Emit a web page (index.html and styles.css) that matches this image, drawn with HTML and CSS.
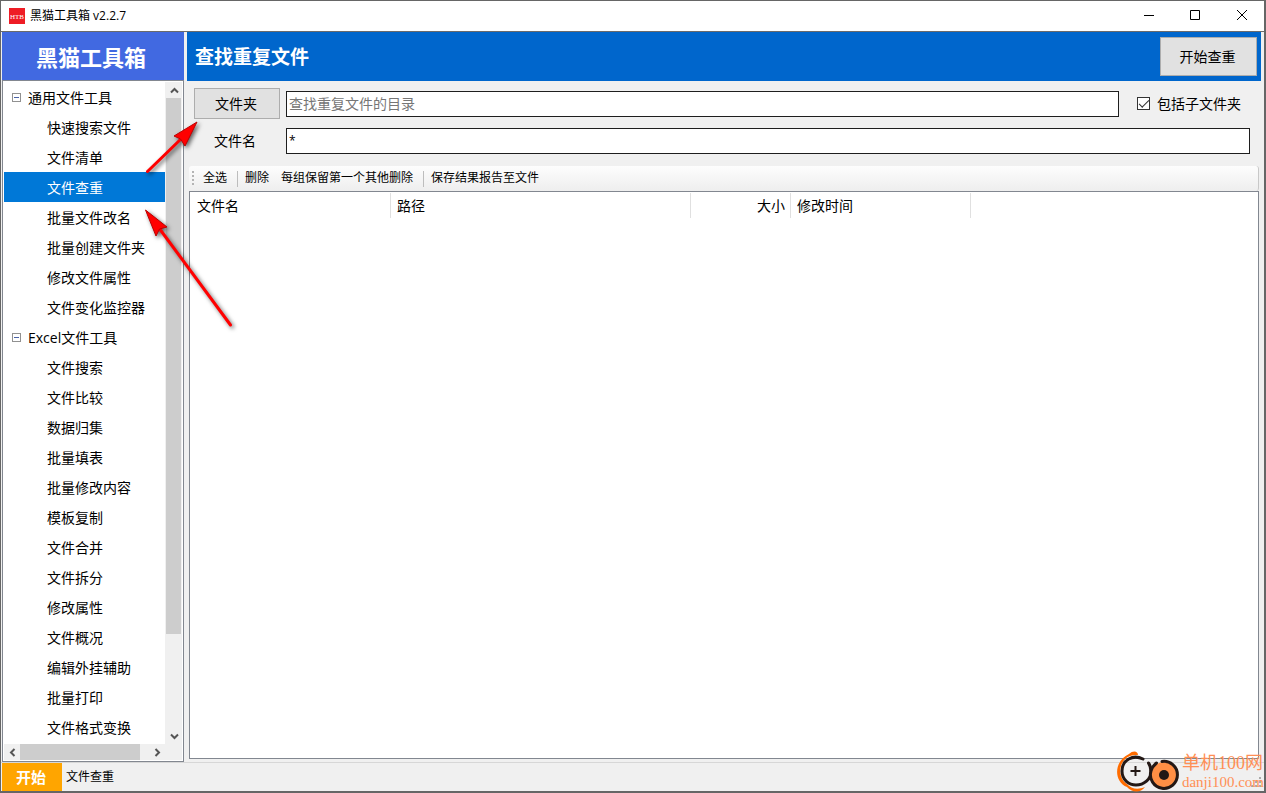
FILE: index.html
```html
<!DOCTYPE html>
<html lang="zh-CN">
<head>
<meta charset="utf-8">
<title>黑猫工具箱 v2.2.7</title>
<link rel="stylesheet" href="styles.css">
</head>
<body>
<div class="window">
  <header class="titlebar">
    <svg class="app-icon" width="16" height="16" viewBox="0 0 16 16" aria-hidden="true"><rect width="16" height="16" fill="#ee1c25"/><text x="8" y="11" text-anchor="middle">HTB</text></svg>
    <span class="app-title">黑猫工具箱 v2.2.7</span>
    <button class="win-btn" aria-label="最小化"><svg width="12" height="12" viewBox="0 0 12 12"><path d="M1 5.500h10"/></svg></button>
    <button class="win-btn" aria-label="最大化"><svg width="12" height="12" viewBox="0 0 12 12"><path d="M1.500 .5h9v9h-9z"/></svg></button>
    <button class="win-btn" aria-label="关闭"><svg width="12" height="12" viewBox="0 0 12 12"><path d="M2 0l10 10M12 0L2 10"/></svg></button>
  </header>

  <div class="workspace">
    <aside class="sidebar">
      <div class="brand">黑猫工具箱</div>
      <nav class="tree">
        <ul class="tree-list">
          <li class="group"><svg class="toggle" width="9" height="9" viewBox="0 0 9 9"><rect x=".5" y=".5" width="8" height="8"/><path d="M2 4.500h5"/></svg>通用文件工具</li>
          <li><a href="#">快速搜索文件</a></li>
          <li><a href="#">文件清单</a></li>
          <li><a href="#" class="selected">文件查重</a></li>
          <li><a href="#">批量文件改名</a></li>
          <li><a href="#">批量创建文件夹</a></li>
          <li><a href="#">修改文件属性</a></li>
          <li><a href="#">文件变化监控器</a></li>
          <li class="group"><svg class="toggle" width="9" height="9" viewBox="0 0 9 9"><rect x=".5" y=".5" width="8" height="8"/><path d="M2 4.500h5"/></svg>Excel文件工具</li>
          <li><a href="#">文件搜索</a></li>
          <li><a href="#">文件比较</a></li>
          <li><a href="#">数据归集</a></li>
          <li><a href="#">批量填表</a></li>
          <li><a href="#">批量修改内容</a></li>
          <li><a href="#">模板复制</a></li>
          <li><a href="#">文件合并</a></li>
          <li><a href="#">文件拆分</a></li>
          <li><a href="#">修改属性</a></li>
          <li><a href="#">文件概况</a></li>
          <li><a href="#">编辑外挂辅助</a></li>
          <li><a href="#">批量打印</a></li>
          <li><a href="#">文件格式变换</a></li>
        </ul>
        <div class="vscroll">
          <button class="scroll-btn" aria-label="向上滚动"><svg width="9" height="7" viewBox="0 0 9 7"><path d="M1 5.500l3.500-3.500L8 5.500"/></svg></button>
          <div class="vtrack"><div class="vthumb"></div></div>
          <button class="scroll-btn" aria-label="向下滚动"><svg width="9" height="7" viewBox="0 0 9 7"><path d="M1 1.500l3.500 3.500L8 1.500"/></svg></button>
        </div>
        <div class="hscroll">
          <button class="scroll-btn" aria-label="向左滚动"><svg width="7" height="9" viewBox="0 0 7 9"><path d="M5.500 1L2 4.500 5.500 8"/></svg></button>
          <div class="htrack"><div class="hthumb"></div></div>
          <button class="scroll-btn" aria-label="向右滚动"><svg width="7" height="9" viewBox="0 0 7 9"><path d="M1.500 1L5 4.500 1.500 8"/></svg></button>
        </div>
      </nav>
    </aside>

    <main class="content">
      <div class="page-head">
        <h1>查找重复文件</h1>
        <button class="btn start-check">开始查重</button>
      </div>
      <form class="criteria">
        <div class="row">
          <button type="button" class="btn folder">文件夹</button>
          <input class="field" type="text" placeholder="查找重复文件的目录" aria-label="文件夹">
          <label class="sub"><input type="checkbox" checked>包括子文件夹</label>
        </div>
        <div class="row">
          <label class="field-label" for="fname">文件名</label>
          <input class="field pattern" id="fname" type="text" value="*">
        </div>
      </form>
      <div class="toolbar">
        <span class="grip"></span>
        <button>全选</button>
        <span class="sep"></span>
        <button>删除</button>
        <button>每组保留第一个其他删除</button>
        <span class="sep"></span>
        <button>保存结果报告至文件</button>
      </div>
      <div class="results">
        <table>
          <colgroup><col class="c-name"><col class="c-path"><col class="c-size"><col class="c-time"><col></colgroup>
          <thead><tr><th>文件名</th><th>路径</th><th class="num">大小</th><th>修改时间</th><th></th></tr></thead>
        </table>
      </div>
    </main>
  </div>

  <footer class="statusbar">
    <button class="start">开始</button>
    <span>文件查重</span>
    <svg class="sizer" width="12" height="12" viewBox="0 0 12 12"><path d="M8 0h2v2H8zM4 4h2v2H4zM8 4h2v2H8zM0 8h2v2H0zM4 8h2v2H4zM8 8h2v2H8z"/></svg>
  </footer>
</div>

<svg class="arrows" width="260" height="340" viewBox="0 0 260 340" aria-hidden="true">
  <g class="arrow"><path class="shaft" d="M147.500 171.500L182 138"/><path class="tip" d="M197 122L174 136L180.500 139L185 146Z"/></g>
  <g class="arrow"><path class="shaft" d="M230.500 325L159 228"/><path class="tip" d="M145.500 210L167 227L159.500 229L156 236Z"/></g>
</svg>

<div class="watermark">
  <svg width="64" height="44" viewBox="0 0 64 44" aria-hidden="true">
    <path class="flame" d="M21 6C21 2 16 1 12 5C-3 12-4 32 10 38C14 43 23 45 28 38C21 41 14 40 10 35C1 29 1 15 10 8.500C14 6 18 6 21 6Z"/>
    <path class="ring" d="M26 10C16 5 5 11 5 22C5 31 12 36 19 36C27 36 34 30 34 23C34 19 33 16 31.500 14"/>
    <path class="plus" d="M13.500 22h10M18.500 17v10"/>
    <circle class="disc" cx="47" cy="26" r="13"/>
    <path class="ring" d="M45 12.500A13.500 13.500 0 1 1 34 22C35 18 37 16 39.500 14"/>
    <circle cx="47" cy="26" r="5" fill="#231815"/>
  </svg>
  <div class="wm-text"><span class="wm-name">单机100网</span><span class="wm-url">danji100.com</span></div>
</div>
</body>
</html>
```
FILE: styles.css
```css
* { box-sizing: border-box; }

body {
  margin: 0;
  height: 100vh;
  font: 14px/20px "Open Sans", "Noto Sans CJK SC", sans-serif;
  color: #000;
  background: #666;
  overflow: hidden;
}

button, input { font: inherit; color: inherit; margin: 0; }
button { padding: 0; border: 0; background: none; }
a { color: inherit; text-decoration: none; }

.window {
  display: flex;
  flex-direction: column;
  height: 100%;
  border: solid #666;
  border-width: 1px 2px 2px 1px;
  background: #f0f0f0;
}

/* Title bar */
.titlebar {
  display: flex;
  align-items: center;
  flex: none;
  height: 31px;
  padding-left: 8px;
  background: #fff;
  border-bottom: 1px solid #6b6b6b;
  font-size: 12px;
}
.app-icon { margin-right: 5px; }
.app-icon text { font: 7px "Liberation Serif", serif; fill: #fff; }
.app-title { flex: 1; }
.win-btn { display: grid; place-items: center; width: 46px; height: 30px; }
.win-btn svg { fill: none; stroke: #000; }

.workspace {
  display: flex;
  flex: 1;
  min-height: 0;
  gap: 3px;
  padding: 0 3px 0 1px;
}

/* Sidebar */
.sidebar { display: flex; flex-direction: column; flex: none; width: 182px; }
.brand {
  flex: none;
  height: 48px;
  padding-right: 4px;
  line-height: 50px;
  text-align: center;
  font-size: 22px;
  font-weight: 700;
  color: #fff;
  background: #4169e1;
}
.tree {
  display: grid;
  grid-template: minmax(0, 1fr) 16px / minmax(0, 1fr) 17px;
  flex: 1;
  min-height: 0;
  padding: 1px;
  border: 1px solid #828790;
  background: #f0f0f0;
  box-shadow: inset 0 0 0 1px #fff;
}
.tree-list {
  margin: 0;
  padding: 0;
  list-style: none;
  overflow: hidden;
  white-space: nowrap;
  line-height: 32px;
  background: #fff;
}
.tree-list li { height: 30px; }
.tree-list a { display: block; height: 30px; padding-left: 43px; }
.tree-list .selected { color: #fff; background: #0078d7; }
.group { display: flex; align-items: center; gap: 7px; padding: 1px 0 0 8px; }
.toggle { fill: #fff; stroke: #919191; }
.toggle path { stroke: #4b63a7; }

.scroll-btn { display: grid; place-items: center; flex: none; width: 16px; height: 16px; }
.scroll-btn svg { fill: none; stroke: #555; stroke-width: 2; }
.vscroll { display: flex; flex-direction: column; min-height: 0; padding: 0 1px; }
.vtrack { flex: 1; }
.vthumb { height: 85%; background: #cdcdcd; }
.hscroll { display: flex; }
.htrack { flex: 1; }
.hthumb { width: 93%; height: 100%; background: #cdcdcd; }

/* Content */
.content { display: flex; flex-direction: column; flex: 1; min-width: 0; }
.page-head {
  display: flex;
  align-items: center;
  justify-content: space-between;
  flex: none;
  height: 49px;
  padding: 0 4px 0 8px;
  color: #fff;
  background: #06c;
}
h1 { margin: 0; font-size: 19px; line-height: 28px; font-weight: 700; }
.btn { border: 1px solid #adadad; background: #e1e1e1; color: #000; }
.start-check { width: 97px; height: 39px; padding-right: 2px; }

.criteria { display: grid; gap: 6px; padding: 7px 11px 10px 7px; }
.row { display: flex; align-items: center; height: 31px; }
.folder { width: 86px; height: 31px; margin-right: 6px; padding-right: 2px; }
.field-label { width: 92px; padding-left: 20px; }
.field {
  flex: 1;
  min-width: 0;
  height: 26px;
  padding: 0 2px;
  border: 1px solid #1e1e1e;
  background: #fff;
  outline: 0;
}
.field::placeholder { color: #767676; opacity: 1; }
.pattern { font-size: 12px; }
.sub { display: flex; align-items: center; gap: 7px; margin: 0 9px 0 18px; }
.sub input {
  appearance: none;
  width: 13px;
  height: 13px;
  border: 1px solid #333;
  background: #fff;
  display: grid;
  place-items: center;
}
.sub input::after {
  content: "";
  width: 9px;
  height: 4px;
  border: solid #333;
  border-width: 0 0 1px 1px;
  transform: translateY(-1px) rotate(-45deg);
}

.toolbar {
  display: flex;
  align-items: center;
  flex: none;
  height: 25px;
  margin: 0 2px;
  padding-left: 3px;
  border-right: 1px solid #c8c8c8;
  border-radius: 3px;
  background: linear-gradient(#fdfdfd, #eee);
  font-size: 12px;
}
.toolbar button { padding: 0 5px 1px; margin: 0 1px; }
.grip { width: 2px; height: 15px; margin-right: 3px; background: repeating-linear-gradient(#b4b4b4 0 2px, transparent 2px 4px); }
.sep { width: 1px; height: 16px; margin: 0 1px 0 4px; background: #bdbdbd; }

.results {
  flex: 1;
  min-height: 0;
  margin: 0 2px 3px;
  padding-top: 1px;
  border: 1px solid #828790;
  background: #fff;
}
table { width: 100%; table-layout: fixed; border-collapse: separate; border-spacing: 0; }
th { height: 25px; padding: 1px 5px 0 6px; font-weight: 400; text-align: left; border-right: 1px solid #e0e0e0; }
th:first-child { padding-left: 7px; }
th:last-child { border-right: 0; }
.num { text-align: right; }
.c-name { width: 201px; }
.c-path { width: 300px; }
.c-size { width: 100px; }
.c-time { width: 180px; }

/* Status bar */
.statusbar {
  display: flex;
  align-items: center;
  gap: 4px;
  flex: none;
  height: 29px;
  padding: 0 1px 0 1px;
  border-top: 1px solid #d7d7d7;
  font-size: 12px;
}
.start { width: 60px; height: 28px; padding-right: 2px; font-size: 15px; font-weight: 700; color: #fff; background: #ffa500; }
.sizer { margin: 12px 0 0 auto; fill: #aaa; }

/* Annotations over the window */
.arrows { position: absolute; left: 0; top: 0; pointer-events: none; }
.arrow { filter: drop-shadow(2px 2px 2px rgba(0, 0, 0, .6)); }
.shaft { stroke: #f00; stroke-width: 3; stroke-linecap: round; }
.tip { fill: #f00; stroke: #b00; stroke-width: 1; }

.watermark {
  position: absolute;
  right: 2px;
  bottom: 0;
  display: flex;
  gap: 1px;
  align-items: flex-start;
  pointer-events: none;
}
.flame { fill: #ff6c00; }
.ring { fill: none; stroke: #231815; stroke-width: 3; stroke-linecap: round; }
.plus { stroke: #231815; stroke-width: 2; }
.disc { fill: #ff8f45; }
.wm-text { display: flex; flex-direction: column; padding-top: 4px; color: #ff8f55; white-space: nowrap; }
.wm-name { font: 18px/20px "Liberation Serif", "Noto Sans CJK SC", serif; }
.wm-url { font: 15px/18px "Liberation Serif", serif; }
```
